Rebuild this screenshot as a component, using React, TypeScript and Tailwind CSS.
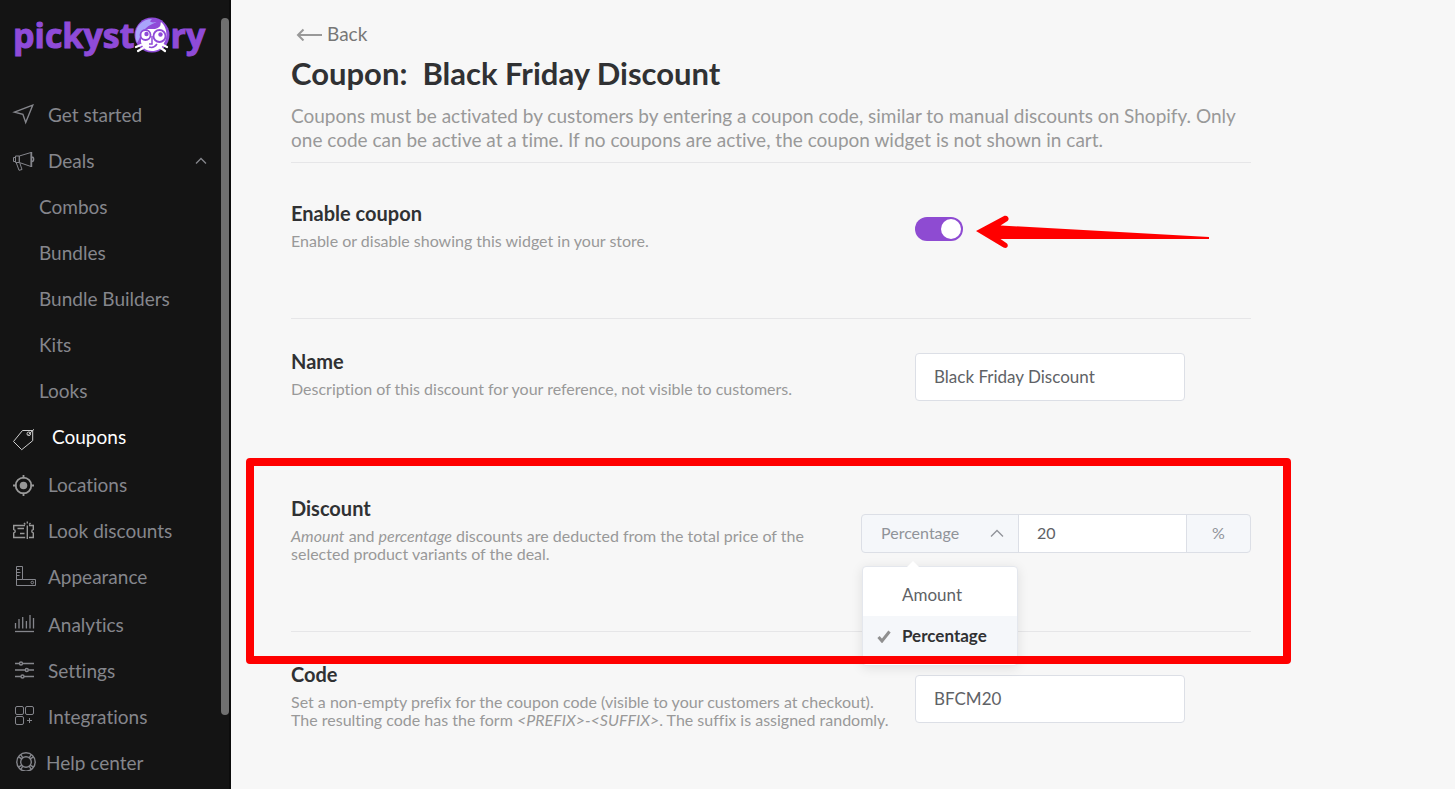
import { useState } from "react";
import type { ReactNode } from "react";

type NavItem = {
  label: string;
  icon: ReactNode;
  className: string;
};

const stroke = {
  width: 24,
  height: 24,
  viewBox: "0 0 24 24",
  fill: "none",
  stroke: "currentColor",
  strokeWidth: 1,
  className: "shrink-0 overflow-visible",
  "aria-hidden": true,
} as const;

const topItems: NavItem[] = [
  {
    label: "Get started",
    className: "gap-3",
    icon: (
      <svg {...stroke} strokeWidth={1.4}>
        <path d="M20.7 2.2 2.5 9.2l8.4 2.1 2.8 8.2z" />
      </svg>
    ),
  },
];

const dealLinks = ["Combos", "Bundles", "Bundle Builders", "Kits", "Looks"];

const bottomItems: NavItem[] = [
  {
    label: "Coupons",
    className: "gap-4 text-white",
    icon: (
      <svg {...stroke} stroke="#cfcfcf">
        <path d="M10.5 5.5h10.2v10.2l-11 9-8.2-8.2z" />
        <circle cx="16.8" cy="8.8" r="1.8" />
        <path d="m16.5 9.5 5.5-5.2" />
      </svg>
    ),
  },
  {
    label: "Locations",
    className: "mt-0.5 gap-3",
    icon: (
      <svg {...stroke} stroke="#999" strokeWidth={1.8}>
        <circle cx="11.5" cy="12.5" r="7.8" />
        <circle cx="11.5" cy="12.5" r="3.8" fill="#999" stroke="none" />
        <path d="M11.5 2v3.5M11.5 19.5v3.5M1 12.5h3.5M18.5 12.5h3.5" />
      </svg>
    ),
  },
  {
    label: "Look discounts",
    className: "gap-3",
    icon: (
      <svg {...stroke} stroke="#999" strokeWidth={1.4}>
        <path d="M13 6.5H1.7v4c2 .4 2 3.1 0 3.5v4.5h11.5M17 18.5h4.3V14c-2-.4-2-3.100 0-3.500v-4H17" />
        <path d="M5.500 9.500h6.500M8 14.500h4.500" />
        <path d="M15.300 6.500V20" />
        <path d="M15.300 2.500v2M12 4l1.300 1.500M18.500 4l-1.300 1.500" />
      </svg>
    ),
  },
  {
    label: "Appearance",
    className: "gap-3",
    icon: (
      <svg {...stroke}>
        <path d="M4.500 1.500h6v13h13v6h-19z" />
        <path d="M4.500 14.500h6M4.500 4.500h3M4.500 7.500h4M4.500 10.500h3" />
        <circle cx="20.300" cy="17.500" r="1.300" />
      </svg>
    ),
  },
  {
    label: "Analytics",
    className: "mt-0.5 gap-3",
    icon: (
      <svg {...stroke} strokeWidth={1.3}>
        <path d="M3.500 10v5.500M7 6v9.500M10.700 4v11.500M14.400 8v7.500M18 2v13.500M21.500 5v10.500" />
        <path d="M3 18.500h19" />
      </svg>
    ),
  },
  {
    label: "Settings",
    className: "gap-3",
    icon: (
      <svg {...stroke} strokeWidth={1.4}>
        <path d="M3 4.500h4.500M10.500 4.500H22M3 11h10M16.500 11H22M3 17.500h6M12 17.500h10" />
        <circle cx="9" cy="4.500" r="1.500" />
        <circle cx="14.800" cy="11" r="1.500" />
        <circle cx="10.500" cy="17.500" r="1.500" />
      </svg>
    ),
  },
  {
    label: "Integrations",
    className: "gap-3",
    icon: (
      <svg {...stroke}>
        <rect x="3.500" y="1.500" width="8" height="8" rx="1.500" />
        <rect x="13.500" y="1.500" width="8" height="8" rx="1.500" />
        <rect x="3.500" y="11.500" width="8" height="8" rx="1.500" />
        <path d="M17.500 13v5M15 15.500h5" />
      </svg>
    ),
  },
  {
    label: "Help center",
    className: "gap-2.5",
    icon: (
      <svg {...stroke} strokeWidth={1.4}>
        <circle cx="14" cy="11" r="9.200" />
        <circle cx="14" cy="11" r="5.300" />
        <path d="m6.500 5.800 3.300 2M8.800 3.500l2 3.300M21.500 5.800l-3.300 2M19.200 3.500l-2 3.300M6.500 16.200l3.300-2M8.800 18.500l2-3.300M21.500 16.200l-3.300-2M19.200 18.500l-2-3.300" />
      </svg>
    ),
  },
];

function NavLink({ item }: { item: NavItem }) {
  return (
    <a href="#" className={`flex h-[46px] shrink-0 items-center pl-3 ${item.className}`}>
      {item.icon}
      <span>{item.label}</span>
    </a>
  );
}

function Logo() {
  return (
    <a
      href="#"
      aria-label="pickystory"
      className="flex h-[46px] shrink-0 items-center pl-[13px] font-['Open_Sans',sans-serif] text-[34px] leading-[46px] font-bold text-[#8f4bd8] [-webkit-text-stroke:1px_#8f4bd8]"
    >
      <span>pickyst</span>
      <svg width="36" height="36" viewBox="0 0 36 36" className="shrink-0" aria-hidden="true">
        <circle cx="18" cy="18" r="17.500" fill="#8f4bd8" />
        <path d="M3 26C-2 13 6 2 18 2c-2 2-2 3-1 3 2 1 4 0 6 0-4 3-8 4-10 7-2 2-3 4-6 5-1 3-2 6-4 9z" fill="#a9a4fb" />
        <path d="M7 19c3-4 6-7 9-8 5-1 9-2 11-6 6 5 7 15 3 21-2 6-7 8-12 8-7 0-10-4-11-9z" fill="#fff" />
        <path d="M11 12c4-4 9-6 15-8 2 5-1 7-5 8z" fill="#8f4bd8" />
        <circle cx="11.500" cy="18" r="5" fill="#fff" stroke="#8f4bd8" strokeWidth="1.800" />
        <circle cx="25.500" cy="19" r="6" fill="#fff" stroke="#8f4bd8" strokeWidth="1.800" />
        <circle cx="12.500" cy="17" r="2.200" fill="#8f4bd8" />
        <circle cx="26.500" cy="17.500" r="2.200" fill="#8f4bd8" />
        <path d="M18 19v8h-3M15 30c3 1 6 0 8-3" fill="none" stroke="#8f4bd8" strokeWidth="1.500" />
        <path d="m2 30 5-2M4 34l5-3M33 30l-4-2M31 34l-4-3" stroke="#fff" strokeWidth="2.200" strokeLinecap="round" />
      </svg>
      <span>ry</span>
    </a>
  );
}

function Sidebar() {
  return (
    <aside className="flex h-full w-[231px] shrink-0 border-r-2 border-[#0c0c0c] bg-[#141414] pb-[18px] text-[19px] text-[#85868c]">
      <div className="flex flex-1 flex-col overflow-hidden pt-3">
        <Logo />
        <nav className="mt-[34px] flex flex-col">
          {topItems.map((item) => (
            <NavLink key={item.label} item={item} />
          ))}
          <button type="button" className="flex h-[46px] shrink-0 items-center gap-3 pr-[14px] pl-3 text-left">
            <svg {...stroke}>
              <path d="M7.300 7 19 3.500v14L7.300 13.500zM3.500 7h3.800v6.500H3.500zM1.500 8.500h2v4h-2zM4.200 13.500 7 21.300l3-.8-2.200-6.500" />
              <path d="M19.500 3v15M20 8c2.200 0 2.200 4.500 0 4.500" strokeWidth={1.4} />
            </svg>
            <span className="flex-1">Deals</span>
            <svg width="12" height="8" viewBox="0 0 12 8" fill="none" stroke="currentColor" strokeWidth={1.3} aria-hidden="true">
              <path d="m1 6.500 5-5 5 5" />
            </svg>
          </button>
          {dealLinks.map((label) => (
            <a key={label} href="#" className="flex h-[46px] shrink-0 items-center pl-[39px]">
              {label}
            </a>
          ))}
          {bottomItems.map((item) => (
            <NavLink key={item.label} item={item} />
          ))}
        </nav>
      </div>
      {/* scroll thumb */}
      <div className="mt-[18px] h-[calc(100%-74px)] w-2 shrink-0 rounded-full bg-[#707070]" />
    </aside>
  );
}

type SectionProps = {
  title: string;
  htmlFor: string;
  text: ReactNode;
  className: string;
  controlClass: string;
  children: ReactNode;
};

function Section({ title, htmlFor, text, className, controlClass, children }: SectionProps) {
  return (
    <section className={`relative flex border-[#e6e6e8] ${className}`}>
      <div className="flex-1 pr-2">
        <label htmlFor={htmlFor} className="block text-[20px] leading-6 font-bold text-[#303133]">
          {title}
        </label>
        <p className="mt-[7px] text-[16px] leading-[18px] text-[#999]">{text}</p>
      </div>
      <div className={`shrink-0 ${controlClass}`}>{children}</div>
    </section>
  );
}

const inputClass =
  "block h-12 w-[270px] rounded border border-[#dcdfe6] bg-white px-[18px] pb-0.5 text-[17px] text-[#606266] outline-none";

export default function App() {
  const [enabled, setEnabled] = useState(true);
  const [name, setName] = useState("Black Friday Discount");
  const [type, setType] = useState("Percentage");
  const [value, setValue] = useState("20");
  const [code, setCode] = useState("BFCM20");

  return (
    <div className="flex h-screen overflow-hidden bg-[#f7f7f7] font-['Lato',sans-serif] [font-variant-ligatures:none]">
      <Sidebar />

      <main className="flex-1 overflow-hidden px-[60px] pt-[22px]">
        <div className="max-w-[960px]">
          <a href="#" className="flex h-6 items-center gap-1 pl-[5px] text-[19px] text-[#777]">
            <svg width="27" height="14" viewBox="0 0 27 14" fill="none" stroke="#999" strokeWidth="2" aria-hidden="true">
              <path d="M26 8H2M7.500 2.500 2 8l5.500 5.500" />
            </svg>
            Back
          </a>
          <h1 className="mt-[7px] text-[31px] leading-10 font-bold text-[#303133]">
            Coupon:&nbsp; Black Friday Discount
          </h1>
          <p className="mt-[11px] pb-[10px] text-[19px] leading-6 text-[#999]">
            Coupons must be activated by customers by entering a coupon code, similar to manual discounts on Shopify.
            Only one code can be active at a time. If no coupons are active, the coupon widget is not shown in cart.
          </p>

          <Section
            title="Enable coupon"
            htmlFor="enable"
            text="Enable or disable showing this widget in your store."
            className="h-[156px] border-t pt-[38px]"
            controlClass="w-[336px] pt-4"
          >
            <div className="relative flex h-6 w-12">
              <input
                id="enable"
                type="checkbox"
                role="switch"
                checked={enabled}
                onChange={(e) => setEnabled(e.target.checked)}
                className="peer h-6 w-12 cursor-pointer appearance-none rounded-full bg-[#c0c4cc] checked:bg-[#8e4bd2]"
              />
              <span className="pointer-events-none absolute top-0.5 left-0.5 size-5 rounded-full bg-white peer-checked:left-[26px]" />
              {/* arrow pointing at the switch */}
              <svg
                width="234"
                height="34"
                viewBox="0 0 234 34"
                className="pointer-events-none absolute -top-0.5 left-[61px]"
                aria-hidden="true"
              >
                <path
                  d="M0 16 28.500.800C32 0 34 4 31.500 6L24.500 10.500 233 22v2H24.500L31 28.500C33 31 31 34 27.500 32.500z"
                  fill="#f00"
                />
              </svg>
            </div>
          </Section>

          <Section
            title="Name"
            htmlFor="name"
            text="Description of this discount for your reference, not visible to customers."
            className="h-[147px] border-t pt-[30px]"
            controlClass="w-[336px] pt-1"
          >
            <input id="name" value={name} onChange={(e) => setName(e.target.value)} className={inputClass} />
          </Section>

          <Section
            title="Discount"
            htmlFor="discount"
            text={
              <>
                <em>Amount</em> and <em>percentage</em> discounts are deducted from the total price of the selected
                product variants of the deal.
              </>
            }
            className="h-[166px] border-t pt-[30px]"
            controlClass="w-[390px] pt-[18px]"
          >
            <div className="relative flex h-[39px] rounded border border-[#dcdfe6] bg-[#f5f7fa] text-[16px] text-[#909399]">
              <div className="relative w-[157px] shrink-0 border-r border-[#dcdfe6]">
                <select
                  aria-label="Discount type"
                  value={type}
                  onChange={(e) => setType(e.target.value)}
                  className="h-full w-full appearance-none bg-transparent pb-0.5 pl-[19px] outline-none"
                >
                  <option>Amount</option>
                  <option>Percentage</option>
                </select>
                <svg
                  width="14"
                  height="9"
                  viewBox="0 0 14 9"
                  fill="none"
                  stroke="currentColor"
                  strokeWidth={1.3}
                  className="pointer-events-none absolute top-[14px] right-[14px]"
                  aria-hidden="true"
                >
                  <path d="m1 7.500 6-6 6 6" />
                </svg>
              </div>
              <input
                id="discount"
                value={value}
                onChange={(e) => setValue(e.target.value)}
                className="w-0 flex-1 bg-white px-[18px] pb-0.5 text-[#606266] outline-none"
              />
              <span className="flex w-16 items-center justify-center border-l border-[#dcdfe6] pb-0.5">%</span>

              <div className="absolute top-[51px] left-0 z-10 w-[156px] rounded border border-[#e4e7ed] bg-white pt-2 pb-2 shadow-[0_2px_12px_rgba(0,0,0,0.1)]">
                <svg width="14" height="7" viewBox="0 0 14 7" className="absolute -top-[6px] left-[43px]" aria-hidden="true">
                  <path d="M0 7 7 0l7 7z" fill="#fff" />
                </svg>
                <ul className="text-[17px] text-[#606266]">
                  {["Amount", "Percentage"].map((option) => (
                    <li key={option}>
                      <button
                        type="button"
                        onClick={() => setType(option)}
                        className={`flex h-[41px] w-full items-center pl-[14px] ${
                          option === type ? "bg-[#f5f7fa] font-bold text-[#303133]" : ""
                        }`}
                      >
                        <span className="w-[25px]">
                          {option === type && (
                            <svg width="14" height="13" viewBox="0 0 14 13" fill="none" stroke="#909090" strokeWidth="3" aria-hidden="true">
                              <path d="m1.500 7 3.500 4 7.500-9.500" />
                            </svg>
                          )}
                        </span>
                        <span className="pb-0.5">{option}</span>
                      </button>
                    </li>
                  ))}
                </ul>
              </div>
            </div>
            {/* highlight frame */}
            <div className="pointer-events-none absolute -top-2 -right-10 -bottom-[33px] -left-[45px] z-20 rounded border-8 border-[#f00]" />
          </Section>

          <Section
            title="Code"
            htmlFor="code"
            text={
              <>
                Set a non-empty prefix for the coupon code (visible to your customers at checkout).
                <br />
                The resulting code has the form <em>&lt;PREFIX&gt;-&lt;SUFFIX&gt;</em>. The suffix is assigned randomly.
              </>
            }
            className="h-[158px] border-t pt-[30px]"
            controlClass="w-[336px] pt-[13px]"
          >
            <input id="code" value={code} onChange={(e) => setCode(e.target.value)} className={inputClass} />
          </Section>
        </div>
      </main>
    </div>
  );
}
